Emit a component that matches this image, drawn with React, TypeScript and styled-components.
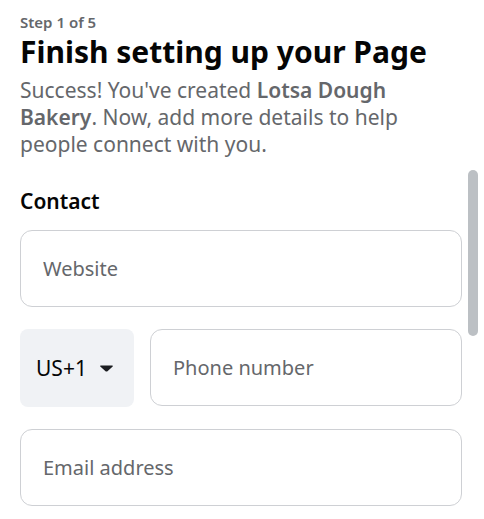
import * as React from 'react';
import styled, { createGlobalStyle } from 'styled-components';

const DocStyle = createGlobalStyle`
  html,
  body {
    margin: 0;
    background: #ffffff;
    color: #050505;
    font-family: 'Noto Sans', 'Open Sans', sans-serif;
  }
`;

const Page = styled.div`
  position: relative;
  width: 484px;
  height: 519px;
  overflow: hidden;
  box-sizing: border-box;
  padding: 13px 22px 0 20px;
`;

const Step = styled.div`
  font-size: 15px;
  line-height: 19px;
  font-weight: 600;
  color: #65676b;
`;

const Title = styled.h1`
  margin: 2px 0 0;
  font-size: 30px;
  line-height: 36px;
  font-weight: 700;
  color: #050505;
`;

const Lead = styled.p`
  max-width: 420px;
  margin: 7px 0 0;
  font-size: 21px;
  line-height: 27px;
  color: #65676b;

  b {
    font-weight: 600;
  }
`;

const SectionTitle = styled.h2`
  margin: 31px 0 0;
  font-size: 21px;
  line-height: 24px;
  font-weight: 600;
  color: #050505;
`;

const Fields = styled.div`
  display: flex;
  flex-direction: column;
  gap: 22px;
  margin-top: 17px;
`;

const Row = styled.div`
  display: flex;
  gap: 16px;
`;

const Field = styled.input<{ $grow?: boolean }>`
  flex: ${p => (p.$grow ? '1 1 0' : 'none')};
  min-width: 0;
  width: ${p => (p.$grow ? 'auto' : '100%')};
  height: 77px;
  box-sizing: border-box;
  padding: 0 22px;
  border: 1px solid #ced0d4;
  border-radius: 12px;
  background: #ffffff;
  font-family: inherit;
  font-size: 20px;
  color: #050505;
  outline: none;

  &::placeholder {
    color: #65676b;
  }
`;

const CountryCode = styled.button`
  display: flex;
  align-items: center;
  gap: 13px;
  width: 114px;
  height: 78px;
  flex: none;
  box-sizing: border-box;
  padding: 0 0 0 16px;
  border: none;
  border-radius: 8px;
  background: #f0f2f5;
  font-family: inherit;
  font-size: 21px;
  color: #050505;
`;

const Thumb = styled.div`
  position: absolute;
  top: 170px;
  right: 6px;
  width: 10px;
  height: 166px;
  border-radius: 5px;
  background: #bcc0c4;
`;

const Caret = () => (
  <svg width="13" height="7" viewBox="0 0 13 7">
    <path d="M0.7 0.5h11.6c0.5 0 0.7 0.6 0.4 0.9L7.5 6.2c-0.6 0.5-1.4 0.5-2 0L0.3 1.4C-0.1 1.1 0.1 0.5 0.7 0.5z" fill="#1c1e21" />
  </svg>
);

export default function App() {
  return (
    <Page>
      <DocStyle />
      <Step>Step 1 of 5</Step>
      <Title>Finish setting up your Page</Title>
      <Lead>
        Success! You've created <b>Lotsa Dough Bakery</b>. Now, add more details to help people connect with you.
      </Lead>
      <SectionTitle>Contact</SectionTitle>
      <Fields>
        <Field placeholder="Website" />
        <Row>
          <CountryCode>
            US+1 <Caret />
          </CountryCode>
          <Field $grow placeholder="Phone number" />
        </Row>
        <Field placeholder="Email address" />
      </Fields>
      <Thumb />
    </Page>
  );
}
